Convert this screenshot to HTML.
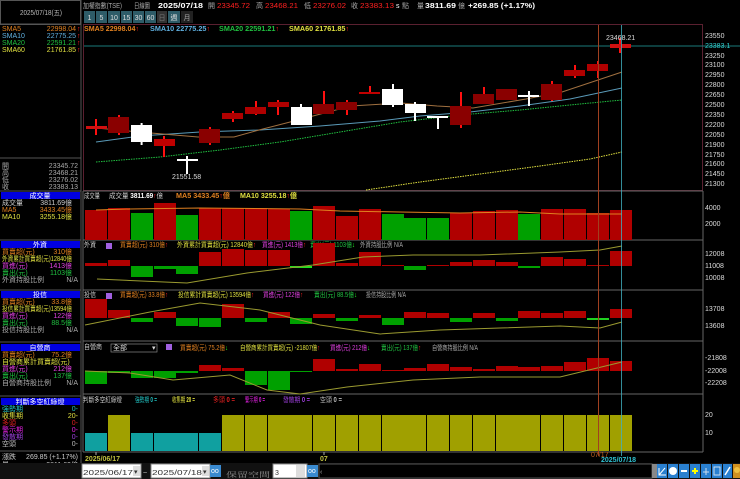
<!DOCTYPE html>
<html><head><meta charset="utf-8"><style>
html,body{margin:0;padding:0;background:#000;width:740px;height:479px;overflow:hidden}
svg{display:block}
text{font-family:"Liberation Sans","Noto Sans CJK TC",sans-serif;font-size:7px}
.m{font-family:"Liberation Mono","Noto Sans CJK TC",monospace}
</style></head><body>
<svg width="740" height="479" viewBox="0 0 740 479" xmlns="http://www.w3.org/2000/svg">
<rect width="740" height="479" fill="#000"/>
<!-- left panel -->
<rect x="0.5" y="0.5" width="80" height="24" fill="#000" stroke="#555"/>
<text x="20" y="15" fill="#bbb" font-size="7" textLength="42" lengthAdjust="spacingAndGlyphs">2025/07/18(五)</text>
<line x1="81" y1="0" x2="81" y2="463" stroke="#555"/>
<text x="2" y="31" fill="#e08020" font-size="6">SMA5</text><text x="76" y="31" fill="#e08020" text-anchor="end" font-size="6">22998.04</text>
<text x="2" y="38" fill="#60b0e0" font-size="6">SMA10</text><text x="76" y="38" fill="#60b0e0" text-anchor="end" font-size="6">22775.25</text>
<text x="2" y="45" fill="#20c040" font-size="6">SMA20</text><text x="76" y="45" fill="#20c040" text-anchor="end" font-size="6">22591.21</text>
<text x="2" y="52" fill="#e0e040" font-size="6">SMA60</text><text x="76" y="52" fill="#e0e040" text-anchor="end" font-size="6">21761.85</text>
<g fill="#ff2020" font-size="6"><text x="77" y="31">↑</text><text x="77" y="38">↑</text><text x="77" y="45">↑</text><text x="77" y="52">↑</text></g>
<line x1="0" y1="24" x2="81" y2="24" stroke="#555"/>
<line x1="0" y1="158" x2="81" y2="158" stroke="#555"/>
<g fill="#aaa" font-size="6"><text x="2" y="168">開</text><text x="2" y="175">高</text><text x="2" y="182">低</text><text x="2" y="189">收</text>
<text x="78" y="168" text-anchor="end">23345.72</text><text x="78" y="175" text-anchor="end">23468.21</text><text x="78" y="182" text-anchor="end">23276.02</text><text x="78" y="189" text-anchor="end">23383.13</text></g>
<g font-size="5.5">
<rect x="1" y="192" width="79" height="7" fill="#0000e0"/><text x="40" y="198" fill="#fff" text-anchor="middle">成交量</text>
<text x="2" y="205" fill="#ccc">成交量</text><text x="72" y="205" fill="#ccc" text-anchor="end">3811.69億</text>
<text x="2" y="212" fill="#e08020">MA5</text><text x="72" y="212" fill="#e08020" text-anchor="end">3433.45億</text>
<text x="2" y="219" fill="#e0e040">MA10</text><text x="72" y="219" fill="#e0e040" text-anchor="end">3255.18億</text>
<rect x="1" y="241" width="79" height="7" fill="#0000e0"/><text x="40" y="247" fill="#fff" text-anchor="middle">外資</text>
<text x="2" y="254" fill="#e08020">買賣超(元)</text><text x="72" y="254" fill="#e08020" text-anchor="end">310億</text>
<text x="2" y="261" fill="#e0e040" textLength="70" lengthAdjust="spacingAndGlyphs">外資累計買賣超(元)12840億</text>
<text x="2" y="268" fill="#e040e0">買進(元)</text><text x="72" y="268" fill="#e040e0" text-anchor="end">1413億</text>
<text x="2" y="275" fill="#20c040">賣出(元)</text><text x="72" y="275" fill="#20c040" text-anchor="end">1103億</text>
<text x="2" y="282" fill="#aaa">外資持股比例</text><text x="78" y="282" fill="#aaa" text-anchor="end">N/A</text>
<rect x="1" y="291" width="79" height="7" fill="#0000e0"/><text x="40" y="297" fill="#fff" text-anchor="middle">投信</text>
<text x="2" y="304" fill="#e08020">買賣超(元)</text><text x="72" y="304" fill="#e08020" text-anchor="end">33.8億</text>
<text x="2" y="311" fill="#e0e040" textLength="70" lengthAdjust="spacingAndGlyphs">投信累計買賣超(元)13594億</text>
<text x="2" y="318" fill="#e040e0">買進(元)</text><text x="72" y="318" fill="#e040e0" text-anchor="end">122億</text>
<text x="2" y="325" fill="#20c040">賣出(元)</text><text x="72" y="325" fill="#20c040" text-anchor="end">88.5億</text>
<text x="2" y="332" fill="#aaa">投信持股比例</text><text x="78" y="332" fill="#aaa" text-anchor="end">N/A</text>
<rect x="1" y="344" width="79" height="7" fill="#0000e0"/><text x="40" y="350" fill="#fff" text-anchor="middle">自營商</text>
<text x="2" y="357" fill="#e08020">買賣超(元)</text><text x="72" y="357" fill="#e08020" text-anchor="end">75.2億</text>
<text x="2" y="364" fill="#e0e040">自營商累計買賣超(元)</text>
<text x="2" y="371" fill="#e040e0">買進(元)</text><text x="72" y="371" fill="#e040e0" text-anchor="end">212億</text>
<text x="2" y="378" fill="#20c040">賣出(元)</text><text x="72" y="378" fill="#20c040" text-anchor="end">137億</text>
<text x="2" y="385" fill="#aaa">自營商持股比例</text><text x="78" y="385" fill="#aaa" text-anchor="end">N/A</text>
<rect x="1" y="398" width="79" height="7" fill="#0000e0"/><text x="40" y="404" fill="#fff" text-anchor="middle">判斷多空紅綠燈</text>
<text x="2" y="411" fill="#20c0c0">強勢期</text><text x="78" y="411" fill="#20c0c0" text-anchor="end">0-</text>
<text x="2" y="418" fill="#e0e040">收集期</text><text x="78" y="418" fill="#e0e040" text-anchor="end">20-</text>
<text x="2" y="425" fill="#e02020">多頭</text><text x="78" y="425" fill="#e02020" text-anchor="end">0-</text>
<text x="2" y="432" fill="#e020e0">警示期</text><text x="78" y="432" fill="#e020e0" text-anchor="end">0-</text>
<text x="2" y="439" fill="#a040e0">發散期</text><text x="78" y="439" fill="#a040e0" text-anchor="end">0-</text>
<text x="2" y="446" fill="#bbb">空頭</text><text x="78" y="446" fill="#bbb" text-anchor="end">0-</text>
<line x1="0" y1="451" x2="81" y2="451" stroke="#555"/>
<text x="2" y="459" fill="#ccc">漲跌</text><text x="78" y="459" fill="#ccc" text-anchor="end">269.85 (+1.17%)</text>
</g>
<g stroke="#555"><line x1="0" y1="191" x2="81" y2="191"/><line x1="0" y1="240" x2="81" y2="240"/><line x1="0" y1="290" x2="81" y2="290"/><line x1="0" y1="342" x2="81" y2="342"/><line x1="0" y1="396" x2="81" y2="396"/></g>

<!-- header -->
<g font-size="7">
<text x="83" y="8" fill="#aaa" textLength="39" lengthAdjust="spacingAndGlyphs">加權指數(TSE)</text>
<text x="134" y="8" fill="#aaa" textLength="16" lengthAdjust="spacingAndGlyphs">日線圖</text>
<text x="158" y="8" fill="#fff" font-weight="bold" textLength="45" lengthAdjust="spacingAndGlyphs">2025/07/18</text>
<text x="208" y="8" fill="#aaa">開</text><text x="217" y="8" fill="#ff2020" textLength="33" lengthAdjust="spacingAndGlyphs">23345.72</text>
<text x="256" y="8" fill="#aaa">高</text><text x="265" y="8" fill="#ff2020" textLength="33" lengthAdjust="spacingAndGlyphs">23468.21</text>
<text x="304" y="8" fill="#aaa">低</text><text x="313" y="8" fill="#ff2020" textLength="33" lengthAdjust="spacingAndGlyphs">23276.02</text>
<text x="351" y="8" fill="#aaa">收</text><text x="360" y="8" fill="#ff2020" textLength="34" lengthAdjust="spacingAndGlyphs">23383.13</text>
<text x="396" y="8" fill="#fff">s</text><text x="402" y="8" fill="#aaa">點</text>
<text x="417" y="8" fill="#aaa">量</text><text x="425" y="8" fill="#fff" font-weight="bold" textLength="31" lengthAdjust="spacingAndGlyphs">3811.69</text><text x="458" y="8" fill="#aaa">億</text>
<text x="468" y="8" fill="#fff" font-weight="bold" textLength="67" lengthAdjust="spacingAndGlyphs">+269.85 (+1.17%)</text>
</g>
<g font-size="7" text-anchor="middle">
<rect x="84" y="11" width="11" height="12" fill="#2e5c68"/><text x="89.5" y="20" fill="#ddd">1</text>
<rect x="96" y="11" width="11" height="12" fill="#2e5c68"/><text x="101.5" y="20" fill="#ddd">5</text>
<rect x="108" y="11" width="12" height="12" fill="#2e5c68"/><text x="114" y="20" fill="#ddd">10</text>
<rect x="121" y="11" width="11" height="12" fill="#2e5c68"/><text x="126.5" y="20" fill="#ddd">15</text>
<rect x="133" y="11" width="11" height="12" fill="#2e5c68"/><text x="138.5" y="20" fill="#ddd">30</text>
<rect x="145" y="11" width="11" height="12" fill="#2e5c68"/><text x="150.5" y="20" fill="#ddd">60</text>
<rect x="157" y="11" width="10" height="12" fill="#333"/><text x="162" y="20" fill="#777">日</text>
<rect x="168" y="11" width="12" height="12" fill="#2e5c68"/><text x="174" y="20" fill="#ddd">週</text>
<rect x="181" y="11" width="12" height="12" fill="#222"/><text x="187" y="20" fill="#aaa">月</text>
</g>

<!-- chart frames -->
<rect x="83.5" y="24.5" width="619" height="166" fill="none" stroke="#5a2030"/>
<g stroke="#666"><line x1="83" y1="191" x2="703" y2="191"/><line x1="83" y1="240" x2="703" y2="240"/><line x1="83" y1="290" x2="703" y2="290"/><line x1="83" y1="341" x2="703" y2="341"/><line x1="83" y1="394" x2="703" y2="394"/><line x1="83" y1="452" x2="703" y2="452"/><line x1="703" y1="191" x2="703" y2="452"/><line x1="83" y1="191" x2="83" y2="452"/></g>
<line x1="84" y1="46" x2="740" y2="46" stroke="#1a7a7a"/>

<g fill="#ddd" font-size="6.5" class="m">
<text x="705" y="38">23550</text><text x="705" y="48" fill="#30d0d0">23383.1</text><text x="705" y="58">23250</text>
<text x="705" y="67">23100</text><text x="705" y="77">22950</text><text x="705" y="87">22800</text><text x="705" y="97">22650</text>
<text x="705" y="107">22500</text><text x="705" y="117">22350</text><text x="705" y="127">22200</text><text x="705" y="137">22050</text>
<text x="705" y="147">21900</text><text x="705" y="157">21750</text><text x="705" y="166">21600</text><text x="705" y="176">21450</text><text x="705" y="186">21300</text>
<text x="705" y="210">4000</text><text x="705" y="226">2000</text>
<text x="705" y="256">12008</text><text x="705" y="268">11008</text><text x="705" y="280">10008</text>
<text x="705" y="311">13708</text><text x="705" y="328">13608</text>
<text x="705" y="360">-21808</text><text x="705" y="373">-22008</text><text x="705" y="385">-22208</text>
<text x="705" y="417">20</text><text x="705" y="435">10</text>
</g>

<g font-size="7" font-weight="bold">
<text x="84" y="31" fill="#e08020" textLength="55" lengthAdjust="spacingAndGlyphs">SMA5 22998.04<tspan fill="#ff2020">↑</tspan></text>
<text x="150" y="31" fill="#60b0e0" textLength="60" lengthAdjust="spacingAndGlyphs">SMA10 22775.25<tspan fill="#ff2020">↑</tspan></text>
<text x="219" y="31" fill="#20c040" textLength="60" lengthAdjust="spacingAndGlyphs">SMA20 22591.21<tspan fill="#ff2020">↑</tspan></text>
<text x="289" y="31" fill="#e0e040" textLength="60" lengthAdjust="spacingAndGlyphs">SMA60 21761.85<tspan fill="#ff2020">↑</tspan></text>
</g>

<polyline fill="none" stroke="#e0e040" stroke-width="1" stroke-dasharray="1.5,1" points="366,190 420,182 480,174 540,166 590,159 622,152"/>
<polyline fill="none" stroke="#20c040" stroke-width="1" stroke-dasharray="1.5,1" points="96,162 160,157 220,150 280,142 340,132 400,122 460,115 520,110 580,104 622,100"/>
<polyline fill="none" stroke="#5a9ab8" stroke-width="1" points="96,142 140,136 200,132 260,130 320,126 380,121 420,116 470,112 520,106 570,99 622,88"/>
<polyline fill="none" stroke="#a07040" stroke-width="1" points="96,128 151,133 198,137 234,137 259,130 294,121 351,106 401,103 437,106 473,108 526,99 562,92 622,72"/>

<g stroke-width="2">
<g stroke="#ff1010">
<line x1="96" y1="119" x2="96" y2="135"/><line x1="119" y1="115" x2="119" y2="135"/><line x1="164" y1="136" x2="164" y2="157"/>
<line x1="210" y1="127" x2="210" y2="145"/><line x1="233" y1="111" x2="233" y2="122"/><line x1="256" y1="101" x2="256" y2="115"/>
<line x1="278" y1="100" x2="278" y2="115"/><line x1="324" y1="91" x2="324" y2="114"/><line x1="347" y1="100" x2="347" y2="115"/>
<line x1="370" y1="86" x2="370" y2="94"/><line x1="461" y1="92" x2="461" y2="106"/><line x1="461" y1="104" x2="461" y2="128"/>
<line x1="484" y1="87" x2="484" y2="100"/><line x1="552" y1="81" x2="552" y2="101"/><line x1="575" y1="65" x2="575" y2="78"/>
<line x1="598" y1="61" x2="598" y2="78"/><line x1="620" y1="38" x2="620" y2="53"/>
</g>
<g stroke="#fff">
<line x1="141.6" y1="123" x2="141.6" y2="145"/><line x1="187" y1="156" x2="187" y2="174"/><line x1="301" y1="104" x2="301" y2="125"/>
<line x1="393" y1="84" x2="393" y2="107"/><line x1="415" y1="102" x2="415" y2="121"/>
<line x1="529" y1="91" x2="529" y2="106"/>
</g>
</g>
<g>
<rect x="86" y="126" width="21" height="3" fill="#d01010"/>
<rect x="108" y="117" width="21" height="16" fill="#8a0000"/>
<rect x="131" y="125" width="21" height="17" fill="#fff"/>
<rect x="154" y="139" width="21" height="7" fill="#c00000"/>
<rect x="177" y="159" width="21" height="2" fill="#fff"/>
<rect x="199" y="129" width="21" height="14" fill="#8a0000"/>
<rect x="222" y="113" width="21" height="6" fill="#b00000"/>
<rect x="245" y="107" width="21" height="7" fill="#b00000"/>
<rect x="268" y="102" width="21" height="5" fill="#b00000"/>
<rect x="291" y="107" width="21" height="18" fill="#fff"/>
<rect x="313" y="104" width="21" height="10" fill="#8a0000"/>
<rect x="336" y="102" width="21" height="8" fill="#8a0000"/>
<rect x="359" y="92" width="21" height="2" fill="#c00000"/>
<rect x="382" y="89" width="21" height="16" fill="#fff"/>
<rect x="405" y="104" width="21" height="9" fill="#fff"/>
<rect x="427" y="116" width="21" height="2" fill="#fff"/>
<line x1="438" y1="117" x2="438" y2="129" stroke="#fff" stroke-width="2"/>
<rect x="450" y="106" width="21" height="19" fill="#8a0000"/>
<rect x="473" y="94" width="21" height="10" fill="#8a0000"/>
<rect x="496" y="89" width="21" height="11" fill="#8a0000"/>
<rect x="518" y="95" width="21" height="2" fill="#fff"/>
<rect x="541" y="84" width="21" height="16" fill="#8a0000"/>
<rect x="564" y="70" width="21" height="6" fill="#b00000"/>
<rect x="587" y="64" width="21" height="7" fill="#b00000"/>
<rect x="610" y="44" width="21" height="4" fill="#d01010"/>
</g>
<text x="172" y="179" fill="#ddd" font-size="6.5">21551.58</text>
<text x="606" y="40" fill="#ddd" font-size="7">23468.21</text>

<!-- volume -->
<g font-size="6">
<text x="84" y="198" fill="#ccc" textLength="16" lengthAdjust="spacingAndGlyphs">成交量</text>
<text x="109" y="198" fill="#ccc" textLength="54" lengthAdjust="spacingAndGlyphs">成交量 <tspan fill="#fff" font-weight="bold">3811.69</tspan><tspan fill="#ff2020">↑</tspan>億</text>
<text x="176" y="198" fill="#e08020" font-weight="bold" textLength="54" lengthAdjust="spacingAndGlyphs">MA5 3433.45<tspan fill="#ff2020">↑</tspan>億</text>
<text x="240" y="198" fill="#e0e040" font-weight="bold" textLength="57" lengthAdjust="spacingAndGlyphs">MA10 3255.18<tspan fill="#ff2020">↑</tspan>億</text>
</g>
<g>
<rect x="85" y="210" width="22" height="30" fill="#b00000"/><rect x="108" y="208" width="22" height="32" fill="#b00000"/><rect x="131" y="213" width="22" height="27" fill="#00a000"/>
<rect x="154" y="203" width="22" height="37" fill="#b00000"/><rect x="176" y="215" width="22" height="25" fill="#00a000"/><rect x="199" y="208" width="22" height="32" fill="#b00000"/>
<rect x="222" y="208" width="22" height="32" fill="#b00000"/><rect x="245" y="208" width="22" height="32" fill="#b00000"/><rect x="268" y="209" width="22" height="31" fill="#b00000"/>
<rect x="290" y="211" width="22" height="29" fill="#00a000"/><rect x="313" y="206" width="22" height="34" fill="#b00000"/><rect x="336" y="216" width="22" height="24" fill="#b00000"/>
<rect x="359" y="209" width="22" height="31" fill="#b00000"/><rect x="382" y="214" width="22" height="26" fill="#00a000"/><rect x="404" y="218" width="22" height="22" fill="#00a000"/>
<rect x="427" y="218" width="22" height="22" fill="#00a000"/><rect x="450" y="213" width="22" height="27" fill="#b00000"/><rect x="473" y="211" width="22" height="29" fill="#b00000"/>
<rect x="496" y="210" width="22" height="30" fill="#b00000"/><rect x="518" y="214" width="22" height="26" fill="#00a000"/><rect x="541" y="209" width="22" height="31" fill="#b00000"/>
<rect x="564" y="209" width="22" height="31" fill="#b00000"/><rect x="587" y="213" width="22" height="27" fill="#b00000"/><rect x="610" y="210" width="22" height="30" fill="#b00000"/>
</g>
<polyline fill="none" stroke="#e08020" stroke-width="1" points="96,210 130,209 200,208 300,209 340,211 400,212 460,213 520,212 560,214 622,214"/>

<!-- foreign -->
<g font-size="6">
<text x="84" y="247" fill="#ccc" textLength="12" lengthAdjust="spacingAndGlyphs">外資</text><rect x="106" y="243" width="6" height="6" fill="#a060e0"/>
<text x="120" y="247" fill="#e08020" textLength="48" lengthAdjust="spacingAndGlyphs">買賣超(元) 310億<tspan fill="#ff2020">↑</tspan></text>
<text x="177" y="247" fill="#e0e040" textLength="79" lengthAdjust="spacingAndGlyphs">外資累計買賣超(元) 12840億<tspan fill="#ff2020">↑</tspan></text>
<text x="262" y="247" fill="#e040e0" textLength="44" lengthAdjust="spacingAndGlyphs">買進(元) 1413億<tspan fill="#ff2020">↑</tspan></text>
<text x="310" y="247" fill="#20c040" textLength="45" lengthAdjust="spacingAndGlyphs">賣出(元) 1103億<tspan fill="#20ff20">↓</tspan></text>
<text x="360" y="247" fill="#aaa" textLength="43" lengthAdjust="spacingAndGlyphs">外資持股比例 N/A</text>
</g>
<g fill="#b00000">
<rect x="85" y="263" width="22" height="3"/><rect x="108" y="260" width="22" height="6"/><rect x="131" y="266" width="22" height="11" fill="#00a000"/>
<rect x="154" y="266" width="22" height="3" fill="#00a000"/><rect x="176" y="266" width="22" height="8" fill="#00a000"/><rect x="199" y="252" width="22" height="14"/>
<rect x="222" y="249" width="22" height="17"/><rect x="245" y="250" width="22" height="16"/><rect x="268" y="250" width="22" height="16"/>
<rect x="290" y="266" width="22" height="2" fill="#20e020"/><rect x="313" y="243" width="22" height="23"/><rect x="336" y="263" width="22" height="3"/>
<rect x="359" y="252" width="22" height="14"/><rect x="382" y="265" width="22" height="1"/><rect x="404" y="266" width="22" height="4" fill="#00a000"/>
<rect x="427" y="265" width="22" height="1"/><rect x="450" y="262" width="22" height="4"/><rect x="473" y="260" width="22" height="6"/>
<rect x="496" y="262" width="22" height="4"/><rect x="518" y="266" width="22" height="2" fill="#00a000"/><rect x="541" y="257" width="22" height="9"/>
<rect x="564" y="259" width="22" height="7"/><rect x="587" y="265" width="22" height="1"/><rect x="610" y="251" width="22" height="15"/>
</g>
<polyline fill="none" stroke="#9a9a30" stroke-width="1" points="97,279 187,283 247,273 313,265 363,257 413,255 480,255 560,252 600,250 622,246"/>

<!-- trust -->
<g font-size="6">
<text x="84" y="297" fill="#ccc" textLength="12" lengthAdjust="spacingAndGlyphs">投信</text><rect x="106" y="293" width="6" height="6" fill="#a060e0"/>
<text x="120" y="297" fill="#e08020" textLength="48" lengthAdjust="spacingAndGlyphs">買賣超(元) 33.8億<tspan fill="#ff2020">↑</tspan></text>
<text x="178" y="297" fill="#e0e040" textLength="76" lengthAdjust="spacingAndGlyphs">投信累計買賣超(元) 13594億<tspan fill="#ff2020">↑</tspan></text>
<text x="263" y="297" fill="#e040e0" textLength="40" lengthAdjust="spacingAndGlyphs">買進(元) 122億<tspan fill="#ff2020">↑</tspan></text>
<text x="314" y="297" fill="#20c040" textLength="43" lengthAdjust="spacingAndGlyphs">賣出(元) 88.5億<tspan fill="#20ff20">↓</tspan></text>
<text x="366" y="297" fill="#aaa" textLength="40" lengthAdjust="spacingAndGlyphs">投信持股比例 N/A</text>
</g>
<g fill="#b00000">
<rect x="85" y="299" width="22" height="19"/><rect x="108" y="310" width="22" height="8"/><rect x="131" y="318" width="22" height="4" fill="#00a000"/>
<rect x="154" y="312" width="22" height="6"/><rect x="176" y="318" width="22" height="8" fill="#00a000"/><rect x="199" y="318" width="22" height="9" fill="#00a000"/>
<rect x="222" y="304" width="22" height="14"/><rect x="245" y="318" width="22" height="4" fill="#00a000"/><rect x="268" y="312" width="22" height="6"/>
<rect x="290" y="318" width="22" height="6" fill="#00a000"/><rect x="313" y="314" width="22" height="4"/><rect x="336" y="318" width="22" height="3" fill="#00a000"/>
<rect x="359" y="315" width="22" height="3"/><rect x="382" y="318" width="22" height="7" fill="#00a000"/><rect x="404" y="312" width="22" height="6"/>
<rect x="427" y="313" width="22" height="5"/><rect x="450" y="318" width="22" height="4" fill="#00a000"/><rect x="473" y="313" width="22" height="5"/>
<rect x="496" y="318" width="22" height="3" fill="#00a000"/><rect x="518" y="311" width="22" height="7"/><rect x="541" y="313" width="22" height="5"/>
<rect x="564" y="311" width="22" height="7"/><rect x="587" y="318" width="22" height="2" fill="#20d020"/><rect x="610" y="309" width="22" height="9"/>
</g>
<polyline fill="none" stroke="#9a9a30" stroke-width="1" points="85,325 150,312 200,303 260,310 320,325 380,334 440,330 500,328 560,326 600,328 622,322"/>

<!-- dealer -->
<g font-size="6">
<text x="84" y="349" fill="#ccc" textLength="18" lengthAdjust="spacingAndGlyphs">自營商</text>
<rect x="111" y="344" width="46" height="8" fill="#000" stroke="#888" stroke-width="0.7"/><text x="113" y="350" fill="#ddd">全部</text><text x="152" y="350" fill="#ddd">▾</text>
<rect x="166" y="344" width="6" height="6" fill="#a060e0"/>
<text x="180" y="350" fill="#e08020" textLength="48" lengthAdjust="spacingAndGlyphs">買賣超(元) 75.2億<tspan fill="#20ff20">↓</tspan></text>
<text x="240" y="350" fill="#e0e040" textLength="80" lengthAdjust="spacingAndGlyphs">自營商累計買賣超(元) -21807億<tspan fill="#ff2020">↑</tspan></text>
<text x="330" y="350" fill="#e040e0" textLength="40" lengthAdjust="spacingAndGlyphs">買進(元) 212億<tspan fill="#20ff20">↓</tspan></text>
<text x="381" y="350" fill="#20c040" textLength="40" lengthAdjust="spacingAndGlyphs">賣出(元) 137億<tspan fill="#ff2020">↑</tspan></text>
<text x="432" y="350" fill="#aaa" textLength="46" lengthAdjust="spacingAndGlyphs">自營商持股比例 N/A</text>
</g>
<g fill="#b00000">
<rect x="85" y="371" width="22" height="13" fill="#00a000"/><rect x="108" y="371" width="22" height="2" fill="#00a000"/><rect x="131" y="371" width="22" height="7" fill="#00a000"/>
<rect x="154" y="371" width="22" height="7" fill="#00a000"/><rect x="176" y="371" width="22" height="2" fill="#00a000"/><rect x="199" y="365" width="22" height="6"/>
<rect x="222" y="368" width="22" height="3"/><rect x="245" y="371" width="22" height="14" fill="#00a000"/><rect x="268" y="371" width="22" height="19" fill="#00a000"/>
<rect x="290" y="371" width="22" height="1" fill="#00a000"/><rect x="313" y="359" width="22" height="12"/><rect x="336" y="369" width="22" height="2"/>
<rect x="359" y="364" width="22" height="7"/><rect x="382" y="370" width="22" height="1"/><rect x="404" y="368" width="22" height="3"/>
<rect x="427" y="364" width="22" height="7"/><rect x="450" y="367" width="22" height="4"/><rect x="473" y="369" width="22" height="2"/>
<rect x="496" y="366" width="22" height="5"/><rect x="518" y="367" width="22" height="4"/><rect x="541" y="366" width="22" height="5"/>
<rect x="564" y="362" width="22" height="9"/><rect x="587" y="358" width="22" height="13"/><rect x="610" y="361" width="22" height="10"/>
</g>
<polyline fill="none" stroke="#9a9a30" stroke-width="1" points="85,371 130,373 173,380 230,375 267,390 300,394 347,387 413,380 480,377 560,377 622,362"/>

<!-- judgement -->
<g font-size="6">
<text x="83" y="402" fill="#ccc" textLength="39" lengthAdjust="spacingAndGlyphs">判斷多空紅綠燈</text>
<text x="135" y="402" fill="#20c0c0" textLength="22" lengthAdjust="spacingAndGlyphs">強勢期 <tspan font-weight="bold">0 =</tspan></text>
<text x="172" y="402" fill="#e0e040" textLength="23" lengthAdjust="spacingAndGlyphs">收集期 <tspan font-weight="bold">20 =</tspan></text>
<text x="213" y="402" fill="#e02020" textLength="22" lengthAdjust="spacingAndGlyphs">多頭 <tspan font-weight="bold">0 =</tspan></text>
<text x="245" y="402" fill="#e020e0" textLength="20" lengthAdjust="spacingAndGlyphs">警示期 <tspan font-weight="bold">0 =</tspan></text>
<text x="283" y="402" fill="#a040e0" textLength="27" lengthAdjust="spacingAndGlyphs">發散期 <tspan font-weight="bold">0 =</tspan></text>
<text x="320" y="402" fill="#bbb" textLength="22" lengthAdjust="spacingAndGlyphs">空頭 <tspan font-weight="bold">0 =</tspan></text>
</g>
<g fill="#a0a000">
<rect x="85" y="433" width="22" height="18" fill="#10a0a0"/><rect x="108" y="415" width="22" height="36"/><rect x="131" y="433" width="22" height="18" fill="#10a0a0"/>
<rect x="154" y="433" width="22" height="18" fill="#10a0a0"/><rect x="176" y="433" width="22" height="18" fill="#10a0a0"/><rect x="199" y="433" width="22" height="18" fill="#10a0a0"/>
<rect x="222" y="415" width="22" height="36"/><rect x="245" y="415" width="22" height="36"/><rect x="268" y="415" width="22" height="36"/>
<rect x="290" y="415" width="22" height="36"/><rect x="313" y="415" width="22" height="36"/><rect x="336" y="415" width="22" height="36"/>
<rect x="359" y="415" width="22" height="36"/><rect x="382" y="415" width="22" height="36"/><rect x="404" y="415" width="22" height="36"/>
<rect x="427" y="415" width="22" height="36"/><rect x="450" y="415" width="22" height="36"/><rect x="473" y="415" width="22" height="36"/>
<rect x="496" y="415" width="22" height="36"/><rect x="518" y="415" width="22" height="36"/><rect x="541" y="415" width="22" height="36"/>
<rect x="564" y="415" width="22" height="36"/><rect x="587" y="415" width="22" height="36"/><rect x="610" y="415" width="22" height="36"/>
</g>

<line x1="598.5" y1="25" x2="598.5" y2="456" stroke="#a04020" stroke-width="1"/>
<line x1="621.5" y1="25" x2="621.5" y2="456" stroke="#40b0c0" stroke-width="0.8"/>

<line x1="96" y1="452" x2="96" y2="455" stroke="#aaa"/><line x1="324" y1="452" x2="324" y2="455" stroke="#aaa"/>
<text x="85" y="461" fill="#c0c040" font-size="6.5" font-weight="bold">2025/06/17</text>
<text x="320" y="461" fill="#c0c040" font-size="6.5" font-weight="bold">07</text>
<text x="591" y="457" fill="#c06020" font-size="5.5">07/17</text>
<text x="601" y="462" fill="#30c0d0" font-size="6.5" font-weight="bold">2025/07/18</text>
<text x="2" y="467" fill="#ccc" font-size="5.5">量</text><text x="78" y="467" fill="#ccc" text-anchor="end" font-size="5.5">3811.69億</text>

<!-- bottom bar -->
<rect x="0" y="463" width="740" height="16" fill="#111"/>
<rect x="82" y="464" width="59" height="14" fill="#fff" stroke="#888"/>
<text x="83" y="475" fill="#333" font-size="10" font-family="Liberation Serif,serif" textLength="50" lengthAdjust="spacingAndGlyphs">2025/06/17</text>
<rect x="133" y="466" width="7" height="10" fill="#ddd"/><text x="134" y="474" font-size="5" fill="#333">▾</text>
<text x="143" y="475" fill="#ccc" font-size="9">~</text>
<rect x="151" y="464" width="59" height="14" fill="#fff" stroke="#888"/>
<text x="152" y="475" fill="#333" font-size="10" font-family="Liberation Serif,serif" textLength="50" lengthAdjust="spacingAndGlyphs">2025/07/18</text>
<rect x="202" y="466" width="7" height="10" fill="#ddd"/><text x="203" y="474" font-size="5" fill="#333">▾</text>
<rect x="210" y="465" width="11" height="12" fill="#3a8ad0"/><text x="211" y="473" fill="#fff" font-size="5">oo</text>
<text x="226" y="477" fill="#888" font-size="12" style="font-family:'Noto Serif CJK SC','Noto Sans CJK TC',serif" textLength="44" lengthAdjust="spacingAndGlyphs">保留空間</text>
<rect x="273" y="464" width="34" height="14" fill="#fff" stroke="#888"/>
<text x="275" y="475" fill="#333" font-size="10" font-family="Liberation Serif,serif">3</text>
<rect x="296" y="465" width="9" height="12" fill="#ddd"/>
<rect x="307" y="465" width="11" height="12" fill="#3a8ad0"/><text x="308" y="473" fill="#fff" font-size="5">oo</text>
<rect x="319" y="464" width="333" height="14" fill="#000" stroke="#555"/>
<text x="320" y="474" fill="#aaa" font-size="8">‹</text>
<rect x="652" y="464" width="6" height="14" fill="#888"/>
<g>
<rect x="657" y="464" width="10" height="14" fill="#2a80d0"/><rect x="668" y="464" width="10" height="14" fill="#2a80d0"/><circle cx="673" cy="471" r="4" fill="#fff"/>
<rect x="679" y="464" width="10" height="14" fill="#2a80d0"/><rect x="681" y="470" width="6" height="2" fill="#fff"/>
<rect x="690" y="464" width="10" height="14" fill="#2a80d0"/><rect x="692" y="470" width="6" height="2" fill="#ff0"/><rect x="694" y="468" width="2" height="6" fill="#ff0"/>
<rect x="701" y="464" width="10" height="14" fill="#2a80d0"/><rect x="712" y="464" width="10" height="14" fill="#2a80d0"/><rect x="723" y="464" width="9" height="14" fill="#2a80d0"/>
<rect x="733" y="464" width="7" height="14" fill="#d09020"/><circle cx="737" cy="470" r="3" fill="#f0c040"/>
<path d="M659 475 L665 468 M659 468 L659 475 L666 475" stroke="#fff" stroke-width="1" fill="none"/>
<path d="M703 472 h6 M706 468 v7" stroke="#cde" stroke-width="1"/>
<path d="M714 467 h6 v8 h-6 z" stroke="#cde" stroke-width="1" fill="none"/>
<path d="M725 475 L730 467" stroke="#fff" stroke-width="1.5"/>
</g>
</svg>
</body></html>
